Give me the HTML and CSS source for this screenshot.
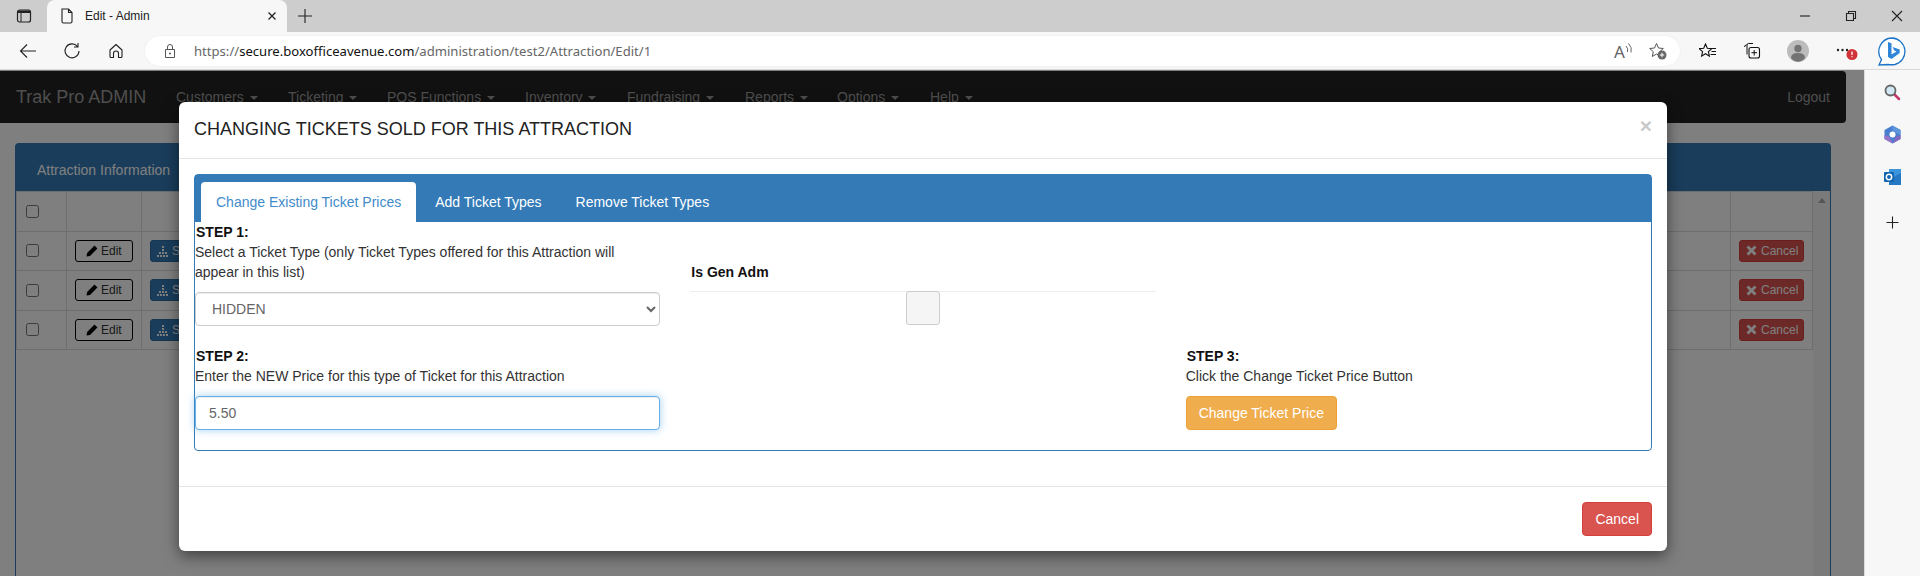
FILE: index.html
```html
<!DOCTYPE html>
<html lang="en">
<head>
<meta charset="utf-8">
<title>Edit - Admin</title>
<link rel="stylesheet" href="styles.css">
</head>
<body>
<div class="tabstrip">
  <svg class="winbtn" width="16" height="14" viewBox="0 0 16 14"><rect x="1.500" y="1" width="13" height="12" rx="2" fill="none" stroke="#222" stroke-width="1.200"/><path d="M2 1.500h12v2.500H2z" fill="#222"/><path d="M5 4v9" stroke="#222"/></svg>
  <div class="tab">
    <svg width="14" height="16" viewBox="0 0 14 16"><path d="M2 1h6.500L12 4.500V13.500q0 1.500-1.500 1.500h-7Q2 15 2 13.500z M8.500 1v3.500H12" fill="none" stroke="#222" stroke-width="1.100"/></svg>
    <span class="tabtitle">Edit - Admin</span>
    <svg width="10" height="10" viewBox="0 0 10 10"><path d="M1.500 1.500l7 7M8.500 1.500l-7 7" stroke="#222" stroke-width="1.300"/></svg>
  </div>
  <svg class="newtab" width="16" height="16" viewBox="0 0 16 16"><path d="M8 1v14M1 8h14" stroke="#222" stroke-width="1.100"/></svg>
  <div class="wincontrols">
    <svg width="12" height="12" viewBox="0 0 12 12"><path d="M1 6h10" stroke="#222" stroke-width="1.100"/></svg>
    <svg width="12" height="12" viewBox="0 0 12 12"><path d="M1.500 3.500h7v7h-7z M3.500 3.500v-2h7v7h-2" fill="none" stroke="#222" stroke-width="1.100"/></svg>
    <svg width="12" height="12" viewBox="0 0 12 12"><path d="M1 1l10 10M11 1L1 11" stroke="#222" stroke-width="1.100"/></svg>
  </div>
</div>

<div class="toolbar">
  <div class="tbtn"><svg width="18" height="16" viewBox="0 0 18 16"><path d="M17 8H1.500M8 1.500L1.500 8 8 14.500" fill="none" stroke="#222" stroke-width="1.100"/></svg></div>
  <div class="tbtn"><svg width="18" height="18" viewBox="0 0 18 18"><path d="M14.500 4.500A7 7 0 1 0 16 9M15 1v4h-4" fill="none" stroke="#222" stroke-width="1.100"/></svg></div>
  <div class="tbtn"><svg width="16" height="18" viewBox="0 0 16 18"><path d="M2 8L8 2.500 14 8v6.500q0 1-1 1h-2.500v-4q0-2.500-2.500-2.500t-2.500 2.500v4H3q-1 0-1-1z" fill="none" stroke="#222" stroke-width="1.100" stroke-linejoin="round"/></svg></div>
  <div class="url">
    <svg class="lock" width="12" height="16" viewBox="0 0 12 16"><path d="M1.500 6.500h9v8h-9z M3.500 6.500V4a2.500 2.500 0 0 1 5 0v2.500" fill="none" stroke="#555"/><circle cx="6" cy="10.500" r="1" fill="#555"/></svg>
    <span class="urltext">https://<span class="domain">secure.boxofficeavenue.com</span>/administration/test2/Attraction/Edit/1</span>
    <svg class="readaloud" width="20" height="26" viewBox="0 0 20 26"><text x="0" y="20" class="a-glyph">A</text><path d="M12 8q2.500 2.500 1.500 6M14.500 5.500q4 4 2.500 9" fill="none" stroke="#666"/></svg>
    <svg class="favadd" width="18" height="18" viewBox="0 0 18 18"><path d="M7.500 1.500l2 4.500 4.800.5-3.600 3.200 1 4.800-4.200-2.500-4.200 2.500 1-4.800L.7 6.500l4.800-.5z" fill="none" stroke="#555"/><circle cx="13" cy="13" r="4.500" fill="#666"/><path d="M13 10.800v4.400M10.800 13h4.400" stroke="#fff"/></svg>
  </div>
  <div class="tbtn"><svg width="18" height="16" viewBox="0 0 18 16"><path d="M6.500 1l1.800 4.200 4.500.4-3.400 3 1 4.500-3.900-2.400-3.900 2.400 1-4.500-3.400-3 4.500-.4z" fill="none" stroke="#111" stroke-width="1.100"/><path d="M12 5.500h5M12.500 8.500h4.500M11.500 11.500h5.500" stroke="#111"/></svg></div>
  <div class="tbtn"><svg width="18" height="18" viewBox="0 0 18 18"><path d="M4 12.500V3q0-1.500 1.500-1.500H10" fill="none" stroke="#111"/><path d="M1.500 5q0-2 2-2" fill="none" stroke="#111"/><rect x="6" y="5.500" width="10.500" height="10.500" rx="2" fill="none" stroke="#111" stroke-width="1.100"/><path d="M11.200 8v5.500M8.500 10.700h5.500" stroke="#111"/></svg></div>
  <div class="tbtn gap2"><svg width="22" height="22" viewBox="0 0 22 22"><circle cx="11" cy="11" r="11" fill="#bcbcbc"/><circle cx="11" cy="8.500" r="3.700" fill="#737373"/><path d="M4 18q0-5 7-5t7 5q-3 3.800-7 3.800T4 18z" fill="#737373"/></svg></div>
  <div class="tbtn gap2"><svg class="more" width="24" height="16" viewBox="0 0 24 16"><circle cx="3" cy="6" r="1.200" fill="#222"/><circle cx="7.500" cy="6" r="1.200" fill="#222"/><circle cx="12" cy="6" r="1.200" fill="#222"/><circle cx="17" cy="10.500" r="5.500" fill="#d13438"/><path d="M17 7.500v3.500M17 12.300v1" stroke="#fff" stroke-width="1.300"/></svg></div>
  <div class="tbtn gap4"><svg width="30" height="30" viewBox="0 0 30 30"><path d="M15 2a13.500 13.500 0 0 1 3 26.500q-4 .5-7 0L2 29l2.500-5.500A13.500 13.500 0 0 1 15 2z" fill="#fff" stroke="#1b74c8" stroke-width="1.300"/><path d="M11 6l3.500 1.200v11.300l5-2.900-2.300-1.100-1.500-3.500 7 2.500v3.500L14.500 23 11 21z" fill="#2f86d8"/></svg></div>
</div>

<div class="main">
  <div class="page">
    <nav class="navbar">
      <span class="brand">Trak Pro ADMIN</span>
      <ul class="menu">
        <li>Customers <i class="caret"></i></li>
        <li>Ticketing <i class="caret"></i></li>
        <li>POS Functions <i class="caret"></i></li>
        <li>Inventory <i class="caret"></i></li>
        <li>Fundraising <i class="caret"></i></li>
        <li>Reports <i class="caret"></i></li>
        <li>Options <i class="caret"></i></li>
        <li>Help <i class="caret"></i></li>
      </ul>
      <span class="logout">Logout</span>
    </nav>

    <section class="panel">
      <div class="panel-head">Attraction Information</div>
      <div class="panel-body">
        <table class="grid">
          <colgroup><col class="c1"><col class="c2"><col class="c3"><col class="c4"></colgroup>
          <tr><td><input type="checkbox"></td><td></td><td></td><td></td></tr>
          <tr>
            <td><input type="checkbox"></td>
            <td><button class="mini edit"><svg width="12" height="12" viewBox="0 0 12 12"><path d="M0.500 11.500l.6-3.500L8.500 .6 11.400 3.500 4 10.900z" fill="#000"/></svg> Edit</button></td>
            <td><button class="mini seats"><svg width="12" height="12" viewBox="0 0 12 12"><path d="M5 1h2v2H5zM5 4h2v2H5zM2 7h2v2H2zM5 7h2v2H5zM8 7h2v2H8zM0 10h2v2H0zM3 10h2v2H3zM6 10h2v2H6zM9 10h2v2H9z" fill="#fff"/></svg> Seats</button></td>
            <td><button class="mini cancel"><svg width="11" height="11" viewBox="0 0 11 11"><path d="M.5 2.500L2.500 .5l3 3 3-3 2 2-3 3 3 3-2 2-3-3-3 3-2-2 3-3z" fill="#fff"/></svg> Cancel</button></td>
          </tr>
          <tr>
            <td><input type="checkbox"></td>
            <td><button class="mini edit"><svg width="12" height="12" viewBox="0 0 12 12"><path d="M0.500 11.500l.6-3.500L8.500 .6 11.400 3.500 4 10.900z" fill="#000"/></svg> Edit</button></td>
            <td><button class="mini seats"><svg width="12" height="12" viewBox="0 0 12 12"><path d="M5 1h2v2H5zM5 4h2v2H5zM2 7h2v2H2zM5 7h2v2H5zM8 7h2v2H8zM0 10h2v2H0zM3 10h2v2H3zM6 10h2v2H6zM9 10h2v2H9z" fill="#fff"/></svg> Seats</button></td>
            <td><button class="mini cancel"><svg width="11" height="11" viewBox="0 0 11 11"><path d="M.5 2.500L2.500 .5l3 3 3-3 2 2-3 3 3 3-2 2-3-3-3 3-2-2 3-3z" fill="#fff"/></svg> Cancel</button></td>
          </tr>
          <tr>
            <td><input type="checkbox"></td>
            <td><button class="mini edit"><svg width="12" height="12" viewBox="0 0 12 12"><path d="M0.500 11.500l.6-3.500L8.500 .6 11.400 3.500 4 10.900z" fill="#000"/></svg> Edit</button></td>
            <td><button class="mini seats"><svg width="12" height="12" viewBox="0 0 12 12"><path d="M5 1h2v2H5zM5 4h2v2H5zM2 7h2v2H2zM5 7h2v2H5zM8 7h2v2H8zM0 10h2v2H0zM3 10h2v2H3zM6 10h2v2H6zM9 10h2v2H9z" fill="#fff"/></svg> Seats</button></td>
            <td><button class="mini cancel"><svg width="11" height="11" viewBox="0 0 11 11"><path d="M.5 2.500L2.500 .5l3 3 3-3 2 2-3 3 3 3-2 2-3-3-3 3-2-2 3-3z" fill="#fff"/></svg> Cancel</button></td>
          </tr>
        </table>
        <div class="scrollbar"><span class="uparrow"></span></div>
      </div>
    </section>

    <div class="overlay"></div>

    <div class="modal">
      <header class="modal-head">
        <h4>CHANGING TICKETS SOLD FOR THIS ATTRACTION</h4>
        <span class="close">×</span>
      </header>
      <div class="modal-body">
        <div class="tabs">
          <ul class="tablist">
            <li class="active">Change Existing Ticket Prices</li>
            <li>Add Ticket Types</li>
            <li>Remove Ticket Types</li>
          </ul>
          <div class="steps">
            <div>
              <strong>STEP 1:</strong>
              <p>Select a Ticket Type (only Ticket Types offered for this Attraction will appear in this list)</p>
              <select class="control spaced"><option>HIDDEN</option></select>
            </div>
            <div class="genadm">
              <strong>Is Gen Adm</strong>
              <input class="bigcheck" type="checkbox" disabled>
            </div>
            <div></div>
            <div>
              <strong>STEP 2:</strong>
              <p>Enter the NEW Price for this type of Ticket for this Attraction</p>
              <input class="control spaced focused" type="text" value="5.50">
            </div>
            <div></div>
            <div>
              <strong>STEP 3:</strong>
              <p>Click the Change Ticket Price Button</p>
              <button class="btn warning spaced">Change Ticket Price</button>
            </div>
          </div>
        </div>
      </div>
      <footer class="modal-foot"><button class="btn danger">Cancel</button></footer>
    </div>
  </div>

  <aside class="sidebar">
    <div class="sideitem"><svg width="17" height="17" viewBox="0 0 17 17"><path d="M10 10l5 5" stroke="#c2366b" stroke-width="2.500" stroke-linecap="round"/><circle cx="6.500" cy="6.500" r="5" fill="#d3e8f5" stroke="#666" stroke-width="1.800"/></svg></div>
    <div class="sideitem"><svg width="17" height="19" viewBox="0 0 17 19"><path d="M8.500 .5l8 4.500v9l-8 4.500-8-4.500V5z" fill="#4a7fd0"/><path d="M8.500 .5l8 4.500v5l-5-2.500-3-2z" fill="#5f95dc"/><path d="M.5 10l5 2 3 6.500-8-4.500z" fill="#9a72c8"/><path d="M16.500 10v4l-8 4.500 3-6.500z" fill="#8468c0"/><circle cx="8.500" cy="9.500" r="3" fill="#fff"/></svg></div>
    <div class="sideitem"><svg width="17" height="17" viewBox="0 0 17 17"><path d="M5 0h12v15H5z" fill="#3d96dc"/><path d="M9 8l8-4v12H5v-5z" fill="#2478c4"/><rect x="0" y="3" width="10" height="10" rx="1" fill="#0f65b0"/><circle cx="5" cy="8" r="2.700" fill="none" stroke="#fff" stroke-width="1.500"/></svg></div>
    <div class="sideitem plusrow"><svg width="13" height="13" viewBox="0 0 13 13"><path d="M6.500 .5v12M.5 6.500h12" stroke="#222" stroke-width="1.100"/></svg></div>
  </aside>
</div>
</body>
</html>
```
FILE: styles.css
```css
* { box-sizing: border-box; }
html, body { margin: 0; height: 576px; overflow: hidden; }
body { font-family: "Liberation Sans", Arial, sans-serif; font-size: 14px; line-height: 20px; color: #333; background: #fff; }
svg { display: block; flex: none; }

/* browser chrome */
.tabstrip { display: flex; align-items: center; height: 32px; background: #cdcdcd; padding-left: 16px; }
.tab { display: flex; align-items: center; width: 240px; height: 32px; margin-left: 15px; padding-left: 13px; background: #f7f7f7; border-radius: 8px 8px 0 0; }
.tabtitle { width: 182px; margin-left: 11px; font-size: 12px; color: #222; }
.newtab { margin-left: 10px; }
.wincontrols { display: flex; gap: 34px; margin-left: auto; margin-right: 17px; }

.toolbar { display: flex; align-items: center; height: 38px; padding-left: 6px; background: #f7f7f7; border-bottom: 1px solid #d9d9d9; }
.tbtn { display: flex; align-items: center; justify-content: center; width: 44px; height: 30px; }
.gap2 { margin-left: 2px; }
.gap4 { margin-left: 4px; }
.url { display: flex; align-items: center; width: 1535px; height: 30px; margin: 0 6px 0 7px; padding-left: 19px; background: #fff; border-radius: 15px; box-shadow: 0 0 2px rgba(0,0,0,.08); }
.urltext { margin-left: 18px; font-family: "Noto Sans", sans-serif; font-size: 13.1px; color: #666; }
.domain { color: #111; }
.readaloud { margin-left: auto; }
.a-glyph { font-family: "Noto Sans", sans-serif; font-size: 17px; fill: #666; }
.favadd { margin: 0 13px 0 15px; }
.more { margin-left: 6px; margin-top: 2px; }

.main { display: flex; height: 506px; }
.page { position: relative; width: 1864px; height: 506px; padding-top: 1px; overflow: hidden; background: #fff; }
.sidebar { width: 56px; padding-top: 1px; background: #f7f7f7; border-left: 1px solid #dcdcdc; }
.sideitem { display: flex; align-items: center; justify-content: center; height: 42.5px; }
.plusrow { margin-top: 3px; }

/* page underneath */
.navbar { display: flex; align-items: center; width: 1846px; height: 52px; padding: 0 16px; background: #222; border-radius: 0 4px 4px 0; color: #9d9d9d; }
.brand { font-size: 18px; width: 160px; white-space: nowrap; }
.menu { display: flex; margin: 0; padding: 0; list-style: none; }
.menu li { white-space: nowrap; }
.menu li:nth-child(1) { width: 112px; }
.menu li:nth-child(2) { width: 99px; }
.menu li:nth-child(3) { width: 138px; }
.menu li:nth-child(4) { width: 102px; }
.menu li:nth-child(5) { width: 118px; }
.menu li:nth-child(6) { width: 92px; }
.menu li:nth-child(7) { width: 93px; }
.caret { display: inline-block; margin-left: 2px; vertical-align: middle; border-top: 4px solid currentColor; border-left: 4px solid transparent; border-right: 4px solid transparent; }
.logout { margin-left: auto; }

.panel { width: 1816px; margin: 20px 0 0 15px; }
.panel-head { height: 48px; padding: 17px 22px; color: #fff; background: #337ab7; border-radius: 4px 4px 0 0; }
.panel-body { display: flex; height: 400px; border: 1px solid #337ab7; border-top: 0; }
.grid { table-layout: fixed; width: 1796px; height: 158px; border-collapse: collapse; }
.c1 { width: 50px; }
.c2 { width: 75px; }
.c3 { width: 1589px; }
.c4 { width: 82px; }
.grid td { height: 39.5px; padding: 0 8px; border: 1px solid #ddd; vertical-align: middle; }
.grid input { display: block; margin: 0 0 0 1px; }
.mini { display: inline-flex; align-items: center; gap: 3px; height: 22px; padding: 0 6px; border: 1px solid; border-radius: 3px; font: 12px/1 "Liberation Sans", Arial, sans-serif; white-space: nowrap; vertical-align: middle; }
.edit { width: 58px; padding-left: 10px; background: #fff; border-color: #000; color: #333; }
.seats { background: #337ab7; border-color: #2e6da4; color: #fff; }
.cancel { width: 65px; gap: 4px; background: #d9534f; border-color: #d43f3a; color: #fff; }
.scrollbar { flex: 1; display: flex; justify-content: center; padding-top: 7px; background: #f4f4f4; }
.uparrow { width: 0; height: 0; border-left: 4px solid transparent; border-right: 4px solid transparent; border-bottom: 5px solid #aaa; }

.overlay { position: absolute; inset: 0; background: rgba(0,0,0,.5); }

/* modal */
.modal { position: absolute; left: 179px; top: 32px; width: 1488px; height: 449px; background: #fff; border-radius: 6px; box-shadow: 0 5px 15px rgba(0,0,0,.5); }
.modal-head { display: flex; justify-content: space-between; height: 57px; padding: 15px; border-bottom: 1px solid #e5e5e5; }
.modal-head h4 { margin: 0; font-size: 18px; font-weight: 400; line-height: 24px; color: #222; white-space: nowrap; }
.close { font-size: 21px; font-weight: 700; line-height: 18px; color: #c9c9c9; }
.modal-body { height: 328px; padding: 15px 15px 0; border-bottom: 1px solid #e5e5e5; }
.tabs { height: 277px; border: 1px solid #337ab7; border-radius: 4px; }
.tablist { display: flex; height: 47px; margin: 0; padding: 7px 0 0 6px; list-style: none; background: #337ab7; color: #fff; }
.tablist li { padding: 10px 16px; height: 40px; margin-right: 2px; }
.tablist .active { padding: 10px 15px; margin-right: 3px; background: #fff; color: #428bca; border-radius: 4px 4px 0 0; }
.steps { display: grid; grid-template-columns: repeat(3, 1fr); grid-auto-rows: auto; column-gap: 30px; row-gap: 20px; }
.steps strong { display: block; padding-left: 1px; color: #111; }
.steps p { margin: 0; }
.spaced { margin-top: 10px; }
.control { display: block; width: 100%; height: 34px; padding: 6px 12px; font: 14px/20px "Liberation Sans", Arial, sans-serif; color: #666; background: #fff; border: 1px solid #ccc; border-radius: 4px; box-shadow: inset 0 1px 1px rgba(0,0,0,.075); }
.focused { padding-left: 13px; border-color: #66afe9; outline: 0; box-shadow: inset 0 1px 1px rgba(0,0,0,.075), 0 0 8px rgba(102,175,233,.6); }
.genadm { padding-top: 40px; }
.genadm strong { padding-bottom: 9px; border-bottom: 1px solid #eee; }
.bigcheck { display: block; width: 34px; height: 34px; margin: -1px auto 0; appearance: none; background: #f5f5f5; border: 1px solid #ccc; border-radius: 3px; }
.btn { display: inline-block; height: 34px; padding: 6px 12px; font: 14px/20px "Liberation Sans", Arial, sans-serif; color: #fff; border: 1px solid; border-radius: 4px; }
.warning { background: #f0ad4e; border-color: #eea236; }
.danger { background: #d9534f; border-color: #d43f3a; }
.modal-foot { display: flex; justify-content: flex-end; padding: 15px; }
```
